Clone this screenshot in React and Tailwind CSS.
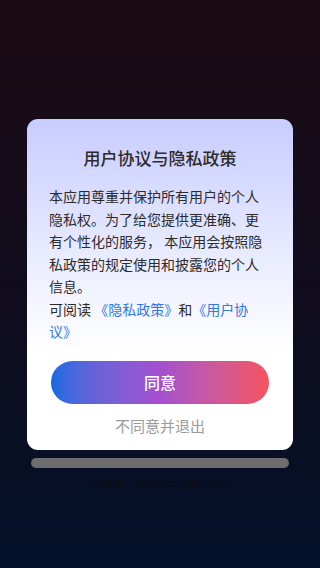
import React from 'react';

const font = { fontFamily: '"Noto Sans CJK SC", "Noto Sans", sans-serif' };

export default function App() {
  return (
    <div
      className="w-[320px] h-[568px] overflow-hidden flex flex-col bg-gradient-to-b from-[#1c0b14] via-[#110c1d] to-[#02112a]"
      style={font}
    >
      {/* modal */}
      <div className="mt-[119px] mx-[27px] rounded-[11px] bg-gradient-to-b from-[#c8ccff] via-[#eceeff] via-[45%] to-white to-[70%] px-[22px] pt-[27px] pb-[13px] flex flex-col">
        <h2 className="text-center text-[17px] leading-[24px] font-medium text-[#2b2b2b]">
          用户协议与隐私政策
        </h2>
        <p className="mt-[15px] text-[14px] leading-[22.5px] text-[#2b2b2b]">
          本应用尊重并保护所有用户的个人隐私权。为了给您提供更准确、更有个性化的服务， 本应用会按照隐私政策的规定使用和披露您的个人信息。
          <br />
          可阅读 <span className="text-[#2f78e6]">《隐私政策》</span>和<span className="text-[#2f78e6]">《用户协<br />议》</span>
        </p>
        <button className="mt-[18px] mx-auto w-[218px] h-[43px] rounded-full bg-gradient-to-r from-[#0a6ae0] via-[#a54fcf] to-[#f6525c] text-white text-[16px] font-medium">
          同意
        </button>
        <div className="mt-[11px] text-center text-[15px] leading-[22px] text-[#9a9a9a]">
          不同意并退出
        </div>
      </div>

      {/* progress */}
      <div className="mt-[8px] mx-[31px] h-[10px] rounded-full bg-[#6d6d6e]" />
      <div className="mt-[8px] text-center text-[11px] leading-[16px] text-[#0b0d18]">
        请稍等～资源正在加载中 0%
      </div>
    </div>
  );
}
